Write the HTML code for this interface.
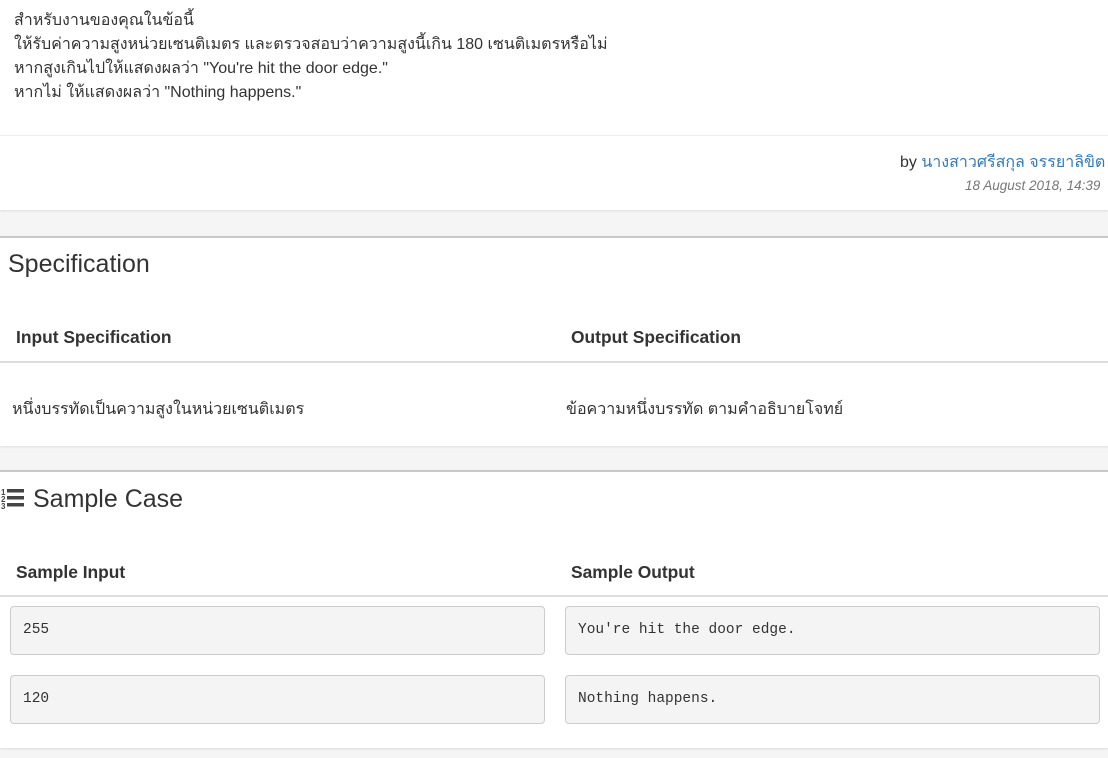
<!DOCTYPE html>
<html><head><meta charset="utf-8"><style>
body{margin:0;background:#f5f5f5;font-family:"Liberation Sans",sans-serif;color:#333;width:1108px;height:758px;overflow:hidden;position:relative}
.p{position:absolute;left:0;width:1108px;background:#fff}
.abs{position:absolute;white-space:nowrap}
.t{font-size:16px;line-height:24px}
.hd{font-weight:bold;font-size:17.4px}
.box{position:absolute;background:#f4f4f4;border:1px solid #ccc;border-radius:4px;height:49px;font-family:"Liberation Mono","DejaVu Sans Mono",monospace;font-size:14.5px;line-height:47px;padding-left:12px;box-sizing:border-box;color:#333}
</style></head><body>
<div class="p" style="top:0;height:210px;box-shadow:0 1px 2px #ddd">
 <div class="abs t" style="left:14px;top:9px">สำหรับงานของคุณในข้อนี้<br>ให้รับค่าความสูงหน่วยเซนติเมตร และตรวจสอบว่าความสูงนี้เกิน 180 เซนติเมตรหรือไม่<br>หากสูงเกินไปให้แสดงผลว่า "You're hit the door edge."<br>หากไม่ ให้แสดงผลว่า "Nothing happens."</div>
 <div style="position:absolute;top:135px;left:0;width:1108px;border-top:1px solid #eee"></div>
 <div class="abs" style="left:900px;top:150px;font-size:16px">by <span style="color:#337ab7">นางสาวศรีสกุล จรรยาลิขิต</span></div>
 <div class="abs" style="left:965px;top:178px;font-size:13.5px;font-style:italic;color:#777">18 August 2018, 14:39</div>
</div>
<div class="p" style="top:236px;height:208px;border-top:2px solid #c8c8c8;box-shadow:0 1px 2px #ddd">
 <div class="abs" style="left:8px;top:12px;font-size:25px">Specification</div>
 <div class="abs hd" style="left:16px;top:89px">Input Specification</div>
 <div class="abs hd" style="left:571px;top:89px">Output Specification</div>
 <div style="position:absolute;top:123px;left:0;width:1108px;border-top:2px solid #ddd"></div>
 <div class="abs t" style="left:12px;top:160px">หนึ่งบรรทัดเป็นความสูงในหน่วยเซนติเมตร</div>
 <div class="abs t" style="left:566px;top:160px">ข้อความหนึ่งบรรทัด ตามคำอธิบายโจทย์</div>
</div>
<div class="p" style="top:470px;height:276px;border-top:2px solid #c8c8c8;box-shadow:0 1px 2px #ddd">
 <svg style="position:absolute;left:1px;top:16px" width="24" height="22" viewBox="0 0 24 22"><text x="0" y="7" font-size="8" font-weight="bold" fill="#444" font-family="Liberation Sans">1</text><text x="0" y="14" font-size="8" font-weight="bold" fill="#444" font-family="Liberation Sans">2</text><text x="0" y="21" font-size="8" font-weight="bold" fill="#444" font-family="Liberation Sans">3</text><rect x="6" y="1" width="17" height="3.5" fill="#444"/><rect x="6" y="8" width="17" height="3.5" fill="#444"/><rect x="6" y="15" width="17" height="3.5" fill="#444"/></svg>
 <div class="abs" style="left:33px;top:13px;font-size:25px">Sample Case</div>
 <div class="abs hd" style="left:16px;top:90px">Sample Input</div>
 <div class="abs hd" style="left:571px;top:90px">Sample Output</div>
 <div style="position:absolute;top:123px;left:0;width:1108px;border-top:2px solid #ddd"></div>
 <div class="box" style="left:10px;top:134px;width:535px">255</div>
 <div class="box" style="left:565px;top:134px;width:535px">You're hit the door edge.</div>
 <div class="box" style="left:10px;top:203px;width:535px">120</div>
 <div class="box" style="left:565px;top:203px;width:535px">Nothing happens.</div>
</div>
</body></html>
